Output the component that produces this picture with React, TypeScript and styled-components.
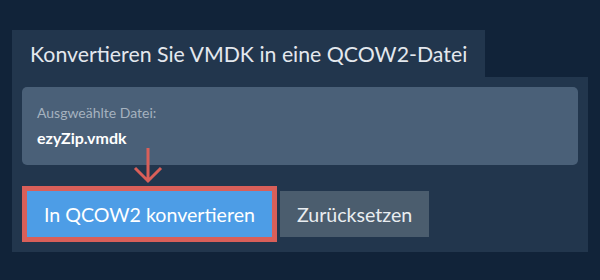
import React from 'react';
import styled, {createGlobalStyle} from 'styled-components';

const GlobalStyle = createGlobalStyle`
    html, body {
        margin: 0;
        padding: 0;
        background: #112339;
    }
    body {
        font-family: Lato, "Open Sans", sans-serif;
    }
`

const Page = styled.div`
    width: 600px;
    height: 280px;
    padding: 30px 12px 0 12px;
    box-sizing: border-box;
`

const Tab = styled.div`
    display: inline-flex;
    align-items: center;
    height: 47px;
    padding: 0 18px;
    background: #22364d;
    color: #e4e8ee;
    font-size: 21.3px;
    font-weight: 400;
    box-sizing: border-box;
`

const Panel = styled.div`
    position: relative;
    background: #22364d;
    padding: 10px 10px 15px 10px;
`

const FileBox = styled.div`
    background: #4a6078;
    border-radius: 5px;
    height: 78px;
    padding: 17px 15px 0 15px;
    box-sizing: border-box;
`

const Label = styled.div`
    color: #a5b2bf;
    font-size: 14px;
    line-height: 17px;
`

const FileName = styled.div`
    color: #ffffff;
    font-size: 16px;
    font-weight: 700;
    line-height: 20px;
    margin-top: 7px;
`

const Actions = styled.div`
    display: flex;
    gap: 8px;
    margin-top: 26px;
    padding-left: 5px;
`

const Button = styled.button<{ $primary?: boolean }>`
    height: 46px;
    padding: 0 17px;
    border: none;
    border-radius: 0;
    font-family: Lato, "Open Sans", sans-serif;
    font-size: 19.6px;
    color: ${p => p.$primary ? '#ffffff' : '#e9edf1'};
    background: ${p => p.$primary ? '#4d9de6' : '#4b5d6e'};
    box-shadow: ${p => p.$primary ? '0 0 0 5px #d95f59' : 'none'};
    cursor: pointer;
`

const Arrow = styled.svg`
    position: absolute;
    left: 121px;
    top: 71px;
`

const App = () => {
    return (
        <Page>
            <GlobalStyle/>
            <Tab>Konvertieren Sie VMDK in eine QCOW2-Datei</Tab>
            <Panel>
                <FileBox>
                    <Label>Ausgweählte Datei:</Label>
                    <FileName>ezyZip.vmdk</FileName>
                </FileBox>
                <Arrow width="30" height="36" viewBox="0 0 30 36">
                    <path d="M15 0 V33 M2 20 L15 33 L28 20" fill="none" stroke="#d95f59" strokeWidth="3"/>
                </Arrow>
                <Actions>
                    <Button $primary>In QCOW2 konvertieren</Button>
                    <Button>Zurücksetzen</Button>
                </Actions>
            </Panel>
        </Page>
    );
};

export default App;
